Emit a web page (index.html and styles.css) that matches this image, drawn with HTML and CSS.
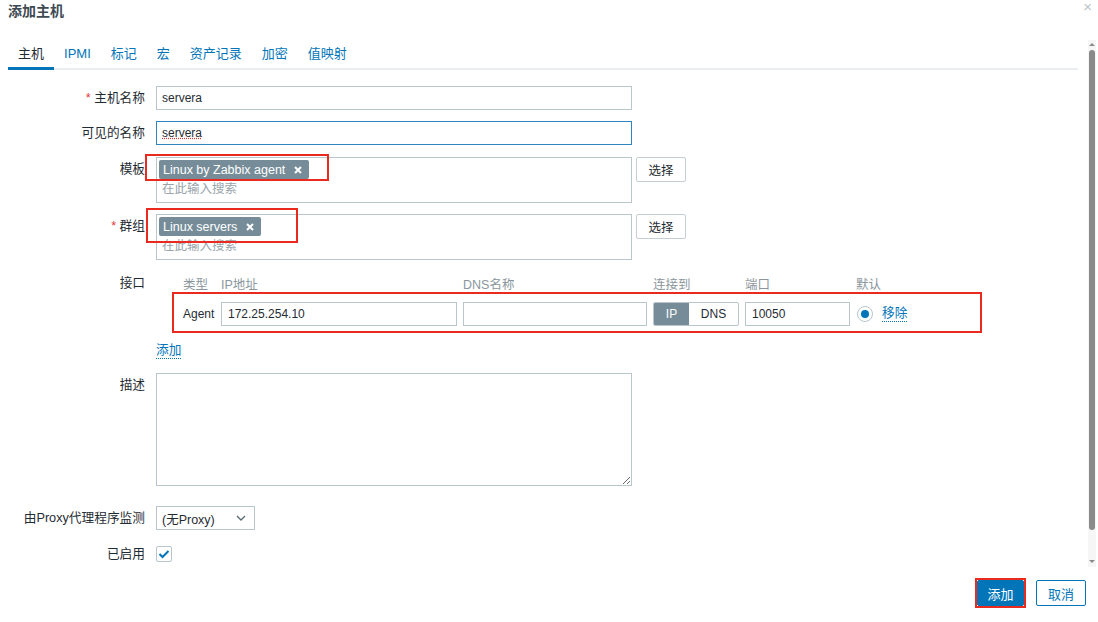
FILE: index.html
```html
<!DOCTYPE html>
<html lang="zh-CN">
<head>
    <meta charset="UTF-8">
    <title>添加主机</title>
    <link rel="stylesheet" href="styles.css">
</head>
<body>
<div class="dialog">
    <div class="dialog-head">
        <h4>添加主机</h4>
        <span class="close">&times;</span>
    </div>

    <div class="dialog-body">
        <div class="content">
            <ul class="tabs">
                <li class="active">主机</li>
                <li>IPMI</li>
                <li>标记</li>
                <li>宏</li>
                <li>资产记录</li>
                <li>加密</li>
                <li>值映射</li>
            </ul>

            <div class="form">
                <div class="row">
                    <label class="lbl"><span class="req">*</span> 主机名称</label>
                    <input class="field" type="text" value="servera">
                </div>
                <div class="row">
                    <label class="lbl">可见的名称</label>
                    <input class="field focused spell" type="text" value="servera">
                </div>
                <div class="row multi-row">
                    <label class="lbl">模板</label>
                    <div class="multi">
                        <span class="tag">Linux by Zabbix agent <svg width="8" height="8" viewBox="0 0 8 8"><path d="M1 1L7 7M7 1L1 7" stroke="#fff" stroke-width="2"/></svg></span>
                        <div class="ph">在此输入搜索</div>
                    </div>
                    <button class="btn-grey">选择</button>
                </div>
                <div class="row">
                    <label class="lbl"><span class="req">*</span> 群组</label>
                    <div class="multi">
                        <span class="tag">Linux servers <svg width="8" height="8" viewBox="0 0 8 8"><path d="M1 1L7 7M7 1L1 7" stroke="#fff" stroke-width="2"/></svg></span>
                        <div class="ph">在此输入搜索</div>
                    </div>
                    <button class="btn-grey">选择</button>
                </div>

                <div class="row">
                    <label class="lbl">接口</label>
                    <div class="iface">
                        <div class="iface-grid head">
                            <span class="first">类型</span>
                            <span>IP地址</span>
                            <span>DNS名称</span>
                            <span>连接到</span>
                            <span>端口</span>
                            <span>默认</span>
                        </div>
                        <div class="iface-grid item">
                            <span class="first">Agent</span>
                            <input class="field" type="text" value="172.25.254.10">
                            <input class="field" type="text" value="">
                            <div class="toggle"><span class="on">IP</span><span>DNS</span></div>
                            <input class="field" type="text" value="10050">
                            <div class="def"><span class="radio"></span><a class="link">移除</a></div>
                        </div>
                        <a class="link add">添加</a>
                    </div>
                </div>

                <div class="row desc-row">
                    <label class="lbl">描述</label>
                    <textarea class="field area"></textarea>
                </div>
                <div class="row proxy-row">
                    <label class="lbl">由Proxy代理程序监测</label>
                    <div class="select">(无Proxy)
                        <svg width="10" height="6" viewBox="0 0 10 6"><path d="M1 1L5 5L9 1" fill="none" stroke="#5a6a73" stroke-width="1.3"/></svg>
                    </div>
                </div>
                <div class="row check-row">
                    <label class="lbl">已启用</label>
                    <span class="check"><svg width="12" height="10" viewBox="0 0 12 10"><path d="M1.5 5L4.5 8L10.5 2" fill="none" stroke="#0275b8" stroke-width="2"/></svg></span>
                </div>
            </div>
        </div>
        <div class="scrollbar">
            <span class="arrow up"></span>
            <span class="thumb"></span>
            <span class="arrow down"></span>
        </div>
    </div>

    <div class="dialog-foot">
        <button class="btn-main">添加</button>
        <button class="btn-alt">取消</button>
    </div>

    <!-- red annotation boxes from the screenshot -->
    <div class="mark" style="left:145px;top:154px;width:184px;height:27px"></div>
    <div class="mark" style="left:146px;top:208px;width:152px;height:35px"></div>
    <div class="mark" style="left:172px;top:292px;width:810px;height:41px"></div>
    <div class="mark" style="left:975px;top:578px;width:51px;height:30px"></div>
</div>
</body>
</html>
```

FILE: styles.css
```css
* {
    box-sizing: border-box;
}

body {
    margin: 0;
    font-family: "Liberation Sans", Arial, "Noto Sans CJK SC", sans-serif;
    font-size: 12px;
    color: #1f2c33;
    background: #fff;
    overflow: hidden;
}

.dialog {
    position: relative;
    width: 1098px;
    height: 622px;
    display: flex;
    flex-direction: column;
}

.dialog-head {
    height: 40px;
    padding: 0 8px;
}

.dialog-head h4 {
    margin: 0;
    font-size: 14px;
    line-height: 22px;
    font-weight: bold;
    color: #3d4a52;
}

.close {
    position: absolute;
    top: 0;
    right: 6px;
    font-size: 15px;
    line-height: 14px;
    color: #b8c4ca;
}

.dialog-body {
    height: 530px;
    display: flex;
}

.content {
    flex: 1;
    padding: 0 10px 0 8px;
}

.scrollbar {
    width: 8px;
    margin-right: 2px;
    height: 527px;
    background: #f6f6f6;
    display: flex;
    flex-direction: column;
    align-items: center;
}

.arrow {
    width: 0;
    height: 0;
    border-left: 3px solid transparent;
    border-right: 3px solid transparent;
}

.arrow.up {
    margin-top: 3px;
    border-bottom: 3px solid #8a8a8a;
}

.arrow.down {
    margin-top: auto;
    margin-bottom: 4px;
    border-top: 3px solid #8a8a8a;
}

.thumb {
    width: 6px;
    height: 480px;
    margin-top: 4px;
    background: #8a8a8a;
    border-radius: 3px;
}

.tabs {
    list-style: none;
    margin: 0;
    padding: 0;
    display: flex;
    border-bottom: 2px solid #ebeef0;
    height: 30px;
}

.tabs li {
    padding: 0 10px;
    font-size: 13px;
    line-height: 27px;
    color: #0275b8;
}

.tabs li.active {
    color: #1f2c33;
    border-bottom: 3px solid #0275b8;
    margin-bottom: -2px;
}

.form {
    padding-top: 16px;
}

.row {
    display: flex;
    align-items: flex-start;
    margin-bottom: 11px;
}

.multi-row {
    margin-top: 12px;
}

.desc-row {
    margin-top: 14px;
}

.proxy-row {
    margin-top: 20px;
}

.check-row {
    margin-top: 12px;
}

.lbl {
    width: 148px;
    padding-right: 11px;
    text-align: right;
    line-height: 24px;
    font-size: 12.7px;
    flex-shrink: 0;
    white-space: nowrap;
}

.req {
    color: #e33734;
}

.field {
    width: 476px;
    height: 24px;
    border: 1px solid #b9c6cc;
    padding: 0 5px;
    font: inherit;
    color: #1f2c33;
    background: #fff;
    outline: none;
}

.field.focused {
    border-color: #2e86c1;
}

.field.spell {
    text-decoration: underline dotted #e33734;
}

.multi {
    width: 476px;
    height: 46px;
    border: 1px solid #b9c6cc;
    padding: 2px;
}

.tag {
    display: inline-flex;
    align-items: center;
    gap: 9px;
    height: 19px;
    padding: 0 7px 0 4px;
    background: #768d99;
    color: #fff;
    font-size: 12.5px;
    border-radius: 2px;
}

.ph {
    padding-left: 3px;
    line-height: 20px;
    color: #9aa5ab;
    font-size: 12.5px;
}

.btn-grey {
    margin-left: 4px;
    width: 50px;
    height: 25px;
    background: #fff;
    border: 1px solid #c4ced3;
    border-radius: 2px;
    font: inherit;
    font-size: 12.5px;
    color: #1f2c33;
}

.iface {
    display: flex;
    flex-direction: column;
}

.iface-grid {
    display: grid;
    grid-template-columns: 59px 236px 184px 86px 105px auto;
    column-gap: 6px;
    align-items: center;
}

.iface-grid.head {
    height: 24px;
    color: #8a969c;
    font-size: 12.5px;
}

.iface-grid.item {
    margin-top: 7px;
}

.iface-grid .first {
    padding-left: 27px;
}

.iface-grid .field {
    width: auto;
    padding-left: 6px;
}

.toggle {
    display: flex;
    height: 24px;
    border: 1px solid #b9c6cc;
    border-radius: 2px;
    overflow: hidden;
}

.toggle span {
    flex: 1;
    line-height: 22px;
    text-align: center;
}

.toggle span.on {
    flex: 0 0 35px;
    background: #768d99;
    color: #fff;
}

.def {
    display: flex;
    align-items: center;
    padding-left: 1px;
}

.radio {
    width: 16px;
    height: 16px;
    border: 1px solid #b9c6cc;
    border-radius: 50%;
    position: relative;
    margin-right: 9px;
}

.radio::after {
    content: "";
    position: absolute;
    left: 3px;
    top: 3px;
    width: 8px;
    height: 8px;
    border-radius: 50%;
    background: #0275b8;
}

.link {
    color: #0275b8;
    border-bottom: 1px dotted #0275b8;
    line-height: 15px;
    font-size: 12.7px;
}

.add {
    align-self: flex-start;
    margin-top: 17px;
}

.area {
    height: 113px;
    resize: vertical;
}

.select {
    width: 99px;
    height: 24px;
    border: 1px solid #b9c6cc;
    padding: 0 8px 0 5px;
    display: flex;
    align-items: center;
    justify-content: space-between;
    font-size: 12.5px;
}

.check {
    width: 16px;
    height: 16px;
    margin-top: 4px;
    border: 1px solid #b9c6cc;
    border-radius: 2px;
    display: flex;
    align-items: center;
    justify-content: center;
}

.dialog-foot {
    display: flex;
    justify-content: flex-end;
    gap: 12px;
    padding: 10px 12px 0 0;
}

.btn-main,
.btn-alt {
    height: 26px;
    border-radius: 2px;
    font: inherit;
    font-size: 13px;
}

.btn-main {
    width: 47px;
    background: #0275b8;
    border: 1px solid #0275b8;
    color: #fff;
}

.btn-alt {
    width: 50px;
    background: #fff;
    border: 1px solid #0275b8;
    color: #0275b8;
}

.mark {
    position: absolute;
    border: 2px solid #eb2a1f;
    pointer-events: none;
}
```
